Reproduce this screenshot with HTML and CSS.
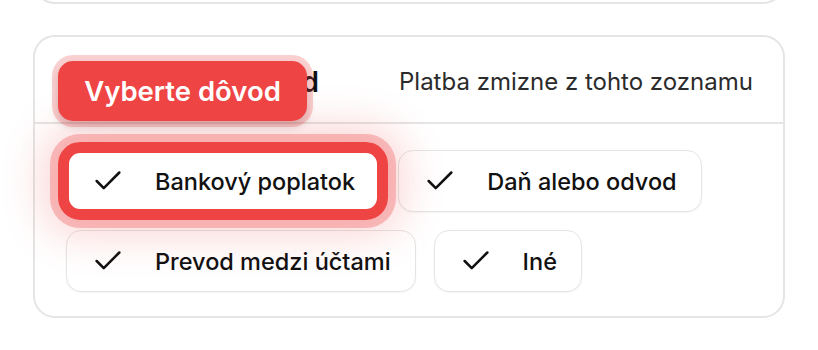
FILE: index.html
```html
<!DOCTYPE html>
<html lang="sk">
<head>
<meta charset="utf-8">
<link rel="stylesheet" href="styles.css">
</head>
<body>
<div class="page">
  <div class="prev-card"></div>
  <section class="card">
    <div class="card-head">
      <div class="head-label">Vyberte dôvod</div>
      <div class="head-note">Platba zmizne z tohto zoznamu</div>
    </div>
    <div class="chips">
      <button class="chip chip-selected">
        <svg class="check" viewBox="0 0 24 24"><path d="M20 6 9 17l-5-5"/></svg>
        <span>Bankový poplatok</span>
        <span class="ring"></span>
      </button>
      <button class="chip">
        <svg class="check" viewBox="0 0 24 24"><path d="M20 6 9 17l-5-5"/></svg>
        <span>Daň alebo odvod</span>
      </button>
      <button class="chip">
        <svg class="check" viewBox="0 0 24 24"><path d="M20 6 9 17l-5-5"/></svg>
        <span>Prevod medzi účtami</span>
      </button>
      <button class="chip">
        <svg class="check" viewBox="0 0 24 24"><path d="M20 6 9 17l-5-5"/></svg>
        <span>Iné</span>
      </button>
    </div>
    <div class="badge">Vyberte dôvod</div>
  </section>
</div>
</body>
</html>
```
FILE: styles.css
```css
* { box-sizing: border-box; }
html, body {
  margin: 0;
  padding: 0;
  background: #ffffff;
  font-family: Inter, "Noto Sans", "Liberation Sans", sans-serif;
  overflow: hidden;
}
.page {
  padding: 0 33px;
}
.prev-card {
  height: 80px;
  margin-top: -76px;
  border: 2px solid #e5e5e5;
  border-radius: 22px;
}
.card {
  position: relative;
  margin-top: 31px;
  border: 2px solid #e5e5e5;
  border-radius: 22px;
  background: #fff;
}
.card-head {
  height: 87px;
  border-bottom: 2px solid #e5e5e5;
  display: flex;
  align-items: center;
  gap: 80px;
  padding-top: 4px;
}
.head-label {
  width: 284px;
  text-align: right;
  font-size: 28px;
  font-weight: 600;
  color: #111;
}
.head-note {
  font-size: 24px;
  font-weight: 400;
  color: #2b2b2b;
}
.chips {
  display: flex;
  flex-wrap: wrap;
  gap: 18px;
  padding: 26px 31px 24px;
}
.chip {
  position: relative;
  display: flex;
  align-items: center;
  gap: 30px;
  height: 62px;
  padding: 0 24px 0 24px;
  border: 1.5px solid #e4e4e4;
  border-radius: 15px;
  background: #fff;
  box-shadow: 0 1px 2px rgba(0,0,0,0.04);
  font-family: inherit;
  font-size: 23.5px;
  font-weight: 500;
  color: #111;
}
.check {
  width: 34px;
  height: 34px;
  fill: none;
  stroke: #111;
  stroke-width: 1.8;
  stroke-linecap: round;
  stroke-linejoin: round;
}
.chip-selected { z-index: 2; }
.ring {
  position: absolute;
  top: -9px;
  left: -9px;
  right: -9px;
  bottom: -9px;
  border: 11px solid #ef4444;
  border-radius: 22px;
  pointer-events: none;
  box-shadow:
    0 0 0 8px rgba(239, 68, 68, 0.3),
    0 0 40px 16px rgba(239, 68, 68, 0.22);
}
.badge {
  position: absolute;
  top: 24px;
  left: 23px;
  width: 249px;
  height: 60px;
  border-radius: 15px;
  background: #ef4444;
  color: #fff;
  font-size: 27.5px;
  font-weight: 600;
  display: flex;
  align-items: center;
  justify-content: center;
  z-index: 3;
  box-shadow:
    0 0 0 6px rgba(239, 68, 68, 0.25),
    0 5px 10px rgba(0, 0, 0, 0.18);
}
```
